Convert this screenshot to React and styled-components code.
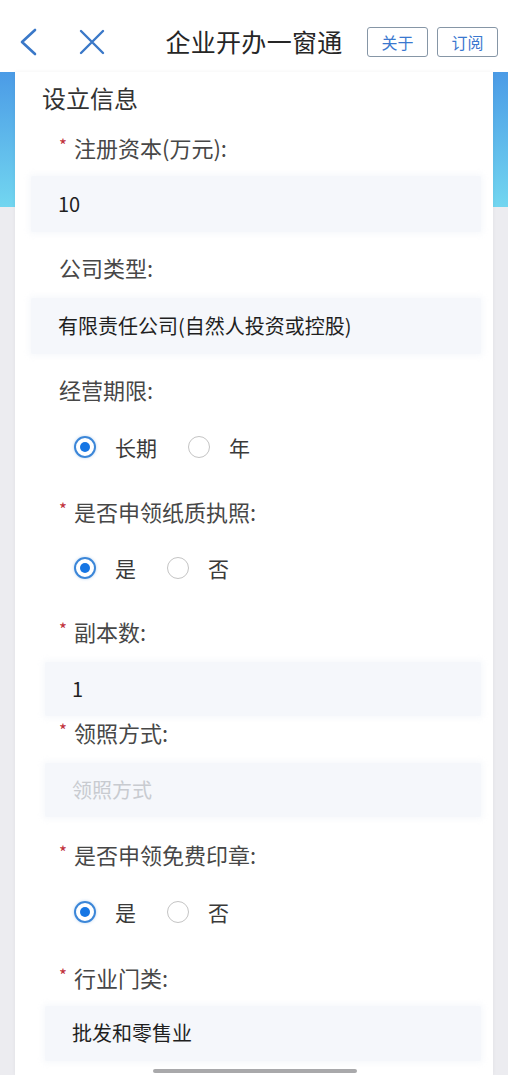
import React from 'react'
import styled, { createGlobalStyle } from 'styled-components'

const GlobalStyle = createGlobalStyle`
  html, body {
    margin: 0;
    padding: 0;
    background: #ececf0;
  }
  body {
    font-family: 'Noto Sans CJK SC', 'Noto Sans', sans-serif;
  }
`

const Screen = styled.div`
  width: 508px;
  height: 1075px;
  overflow: hidden;
  position: relative;
  background: #ececf0;
`

const Header = styled.div`
  height: 72px;
  box-sizing: border-box;
  padding-top: 12px;
  background: #fff;
  display: grid;
  grid-template-columns: 1fr auto 1fr;
  align-items: center;
`

const NavIcons = styled.div`
  display: flex;
  align-items: center;
  height: 60px;
`

const Title = styled.div`
  font-size: 25px;
  color: #262626;
  letter-spacing: 0.3px;
  line-height: 30px;
  padding-bottom: 2px;
`

const Actions = styled.div`
  display: flex;
  justify-content: flex-end;
  gap: 9px;
  padding-right: 10px;
`

const HeadButton = styled.div`
  width: 61px;
  height: 30px;
  box-sizing: border-box;
  border: 1px solid #8696a6;
  border-radius: 3px;
  color: #3a78cf;
  font-size: 16px;
  display: flex;
  align-items: center;
  justify-content: center;
`

const Body = styled.div`
  padding: 0 15px;
  background: linear-gradient(to bottom, #4b9be6 0px, #72d6f0 135px, #ececf0 135px, #ececf0 100%);
`

const Card = styled.div`
  background: #fff;
  min-height: 1003px;
  box-sizing: border-box;
  padding: 12px 12px 0 16px;
  box-shadow: 0 0 4px rgba(0, 0, 0, 0.05);
`

const SectionTitle = styled.div`
  font-size: 24px;
  line-height: 28px;
  height: 30px;
  color: #333;
  margin-left: 11px;
`

const Label = styled.div`
  display: flex;
  align-items: center;
  box-sizing: border-box;
  height: ${({ $h }) => $h || 56}px;
  margin-top: ${({ $mt }) => $mt || 0}px;
  padding-left: 28px;
  padding-bottom: 3px;
  font-size: 22px;
  color: #474747;
`

const Star = styled.span`
  width: 15px;
  font-size: 17px;
  color: #c0303a;
  position: relative;
  top: -2px;
`

const Field = styled.div`
  box-sizing: border-box;
  height: ${({ $h }) => $h || 56}px;
  margin-top: ${({ $mt }) => $mt || 0}px;
  margin-left: ${({ $inset }) => ($inset ? 14 : 0)}px;
  background: #f5f7fb;
  border-radius: 2px;
  box-shadow: 0 0 6px 2px rgba(245, 247, 251, 0.9);
  display: flex;
  align-items: center;
  padding-left: 27px;
  padding-bottom: 2px;
  font-size: 20px;
  color: ${({ $placeholder }) => ($placeholder ? '#c8cbd0' : '#1f1f1f')};
`

const RadioRow = styled.div`
  height: ${({ $h }) => $h || 56}px;
  display: flex;
  align-items: center;
  padding-left: 43px;
`

const Option = styled.div`
  display: flex;
  align-items: center;
  margin-right: 31px;
  font-size: 21px;
  color: #3a3a3a;
`

const Circle = styled.span`
  width: 22px;
  height: 22px;
  box-sizing: border-box;
  border-radius: 50%;
  margin-right: 19px;
  display: flex;
  align-items: center;
  justify-content: center;
  border: ${({ $on }) => ($on ? '2px solid #3b86d8' : '1px solid #c4c4c4')};
  box-shadow: ${({ $on }) => ($on ? '0 0 3px rgba(59,134,216,0.35)' : 'none')};
  &::after {
    content: '';
    width: 10px;
    height: 10px;
    border-radius: 50%;
    background: #1676e4;
    display: ${({ $on }) => ($on ? 'block' : 'none')};
  }
`

const HomeBar = styled.div`
  position: absolute;
  left: 153px;
  bottom: 2px;
  width: 204px;
  height: 4px;
  border-radius: 2px;
  background: #a9a9ab;
`

const BackIcon = () => (
  <svg width="24" height="30" viewBox="0 0 24 30" style={{ marginLeft: 16 }}>
    <polyline points="19,3 6,15 19,27" fill="none" stroke="#3a78c8" strokeWidth="2.6" strokeLinecap="round" strokeLinejoin="round" />
  </svg>
)

const CloseIcon = () => (
  <svg width="28" height="28" viewBox="0 0 28 28" style={{ marginLeft: 38 }}>
    <path d="M3 3 L25 25 M25 3 L3 25" fill="none" stroke="#3a78c8" strokeWidth="2.4" strokeLinecap="round" />
  </svg>
)

const Radio = ({ options, value, h }) => (
  <RadioRow $h={h}>
    {options.map((o) => (
      <Option key={o}>
        <Circle $on={o === value} />
        {o}
      </Option>
    ))}
  </RadioRow>
)

const FormLabel = ({ required, children, ...rest }) => (
  <Label {...rest}>
    {required && <Star>*</Star>}
    {children}
  </Label>
)

export default function App() {
  return (
    <Screen>
      <GlobalStyle />
      <Header>
        <NavIcons>
          <BackIcon />
          <CloseIcon />
        </NavIcons>
        <Title>企业开办一窗通</Title>
        <Actions>
          <HeadButton>关于</HeadButton>
          <HeadButton>订阅</HeadButton>
        </Actions>
      </Header>
      <Body>
        <Card>
          <SectionTitle>设立信息</SectionTitle>

          <FormLabel required $mt={6}>注册资本(万元):</FormLabel>
          <Field>10</Field>

          <FormLabel $mt={8}>公司类型:</FormLabel>
          <Field $mt={2}>有限责任公司(自然人投资或控股)</Field>

          <FormLabel $mt={8}>经营期限:</FormLabel>
          <Radio options={['长期', '年']} value="长期" h={58} />

          <FormLabel required $mt={8}>是否申领纸质执照:</FormLabel>
          <Radio options={['是', '否']} value="是" />

          <FormLabel required $mt={8}>副本数:</FormLabel>
          <Field $inset $mt={2} $h={54}>1</Field>

          <FormLabel required $h={34}>领照方式:</FormLabel>
          <Field $inset $placeholder $mt={13} $h={54}>领照方式</Field>

          <FormLabel required $mt={10}>是否申领免费印章:</FormLabel>
          <Radio options={['是', '否']} value="是" h={58} />

          <FormLabel required $mt={9}>行业门类:</FormLabel>
          <Field $inset $h={55}>批发和零售业</Field>
        </Card>
      </Body>
      <HomeBar />
    </Screen>
  )
}
